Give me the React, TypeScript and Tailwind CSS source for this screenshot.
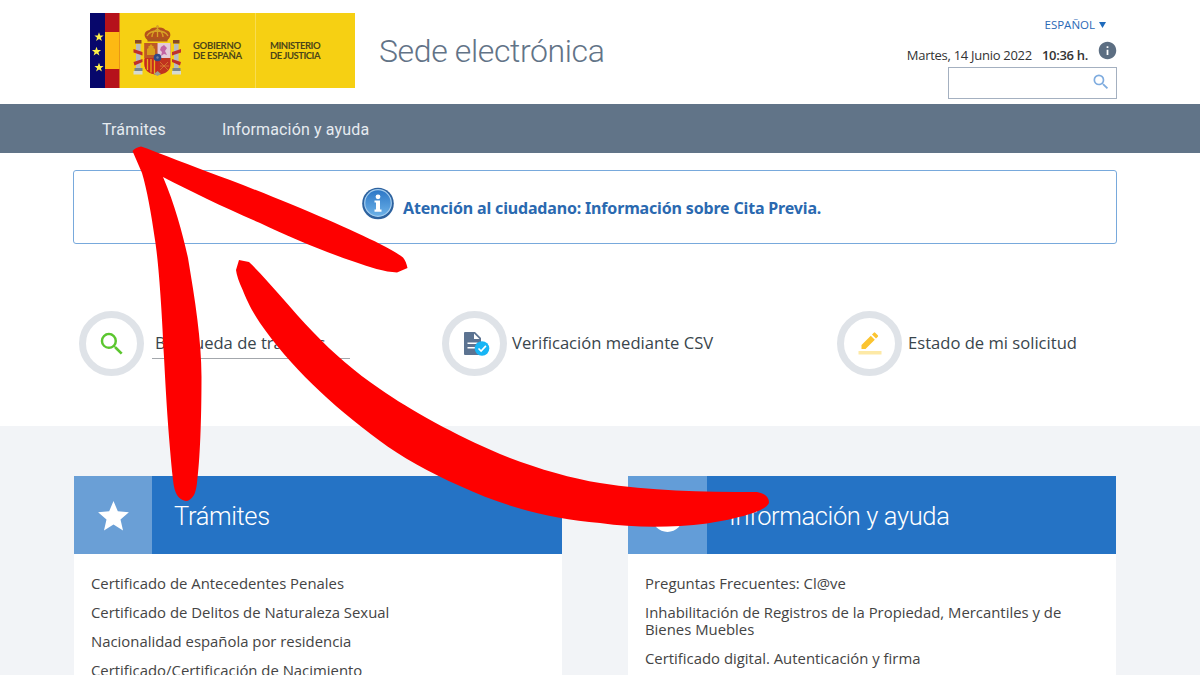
import React from "react";
import { MdSearch, MdStar, MdInfo } from "react-icons/md";

function Star({ x, y }: { x: number; y: number }) {
  return (
    <path
      transform={`translate(${x} ${y})`}
      fill="#fdf04a"
      d="M0-4.8 1.2-1.4 4.6-1.4 1.9.7 2.9 4 0 2-2.9 4-1.9.7-4.6-1.4-1.2-1.4Z"
    />
  );
}

function Emblem() {
  return (
    <svg className="block shrink-0" width="92" height="75" viewBox="0 0 92 75">
      <rect width="15" height="75" fill="#07076b" />
      <rect x="15" width="14.500" height="75" fill="#b5121b" />
      <rect x="15" y="19" width="14.500" height="37" fill="#fdb913" />
      <Star x={9} y={24} />
      <Star x={6.5} y={38.5} />
      <Star x={9} y={54.5} />
      <g>
        <rect x="46" y="31" width="4.600" height="24" fill="#b9bcc0" />
        <rect x="84" y="31" width="4.600" height="24" fill="#b9bcc0" />
        <path d="M45 27h6.500v3.500h-6.500ZM83 27h6.500v3.500h-6.500Z" fill="#8a4a24" />
        <path d="M44.500 55h8v3h-8ZM82.500 55h8v3h-8Z" fill="#77858c" />
        <path d="M43.500 58h9v3.500h-9ZM82 58h9v3.500h-9Z" fill="#d6dad0" />
        <path d="M43.500 36l9 3v3.500l-9-3ZM91 36l-9 3v3.500l9-3ZM43.500 49l9-3v3l-8 3.500ZM91 49l-9-3v3l8 3.500Z" fill="#c0302a" />
        <path d="M57.500 27c-5-4-3-9.500 2-10 2-2.500 5-2.500 8-2.500s6 0 8 2.500c5 .5 7 6 2 10Z" fill="#b5521c" />
        <path d="M57 23c2-4 5-5 10.500-5s8.500 1 10.500 5M62 24c0-4 2-6 5.500-8 3.500 2 5.500 4 5.500 8M67.500 12v12M66 13.500h3" fill="none" stroke="#d8a325" strokeWidth="1.300" />
        <rect x="57.500" y="25.500" width="20" height="3" fill="#a8561f" />
        <path d="M54.500 30h26v21c0 7-5 10-13 11-8-1-13-4-13-11Z" fill="#c0331f" />
        <path d="M54.500 30h13v15h-13Z" fill="#bd5a26" />
        <path d="M67.500 30h13v15h-13Z" fill="#e4cbd8" />
        <path d="M71 34l3-2 3 3-2 3 2 4-3-1-3 2 1-4-2-2Z" fill="#c264a4" />
        <path d="M57 42v-6l1.500-1v-2h1l1.500-2 1.500 2h1v2l1.500 1v6Z" fill="#d9a01c" />
        <path d="M54.500 46h13v15.500c-8-1-13-3-13-10.500Z" fill="#c8291f" />
        <path d="M57.500 46v11M61 46v13.500M64.500 46v15" stroke="#e9ad1c" strokeWidth="1.300" />
        <path d="M70 49l8 8M78 49l-8 8M70 53h9" stroke="#d98233" strokeWidth=".8" />
        <circle cx="67.500" cy="44.500" r="3.800" fill="#314a86" />
        <circle cx="67.500" cy="44.500" r="1.200" fill="#71809e" />
        <path d="M64 61l3.500-3 3.500 3-3.500 2Z" fill="#9c9f91" />
      </g>
    </svg>
  );
}

function Logo() {
  return (
    <div className="flex h-[75px] w-[265px] items-start bg-[#f6d013] font-['Lato','Open_Sans',sans-serif] text-[9.5px] font-bold leading-[10px] text-[#4b4518]">
      <Emblem />
      <div className="ml-[11px] w-[62px] whitespace-nowrap pt-[28px] tracking-[-0.3px]">
        GOBIERNO
        <br />
        DE ESPAÑA
      </div>
      <div className="h-full w-[100px] whitespace-nowrap border-l border-[#f9dc50] pl-[14px] pt-[28px] tracking-[-0.48px]">
        MINISTERIO
        <br />
        DE JUSTICIA
      </div>
    </div>
  );
}

function Header() {
  return (
    <header className="flex h-[104px] bg-white pl-[90px] pr-[83px]">
      <div className="pt-[13px]">
        <Logo />
      </div>
      <h1 className="ml-[24px] whitespace-nowrap pt-[31px] font-['Roboto'] text-[32px] font-light leading-[40px] tracking-[-0.38px] text-[#627387]">
        Sede electrónica
      </h1>
      <div className="ml-auto flex flex-col items-end font-['Open_Sans'] text-[#333]">
        <div className="mr-[11px] mt-[17px] flex h-4 items-center gap-1 text-[11.5px] text-[#2a69b5]">
          <span className="whitespace-nowrap">ESPAÑOL</span>
          <svg width="7" height="6" viewBox="0 0 7 6">
            <path d="M0 0h7L3.500 6Z" fill="#1f6bbd" />
          </svg>
        </div>
        <div className="mt-[7px] flex h-[20px] whitespace-nowrap text-[13px]">
          <span className="pt-[5px] leading-[20px] tracking-[-0.28px]">Martes, 14 Junio 2022</span>
          <b className="ml-[10px] pt-[5px] font-semibold leading-[20px] tracking-[-0.3px]">10:36 h.</b>
          <MdInfo className="ml-[9px] -mr-[1px] size-[21px] text-[#5c6e82]" />
        </div>
        <div className="mt-[7px] flex h-[32px] w-[169px] items-center justify-end border border-[#a4b0c0] pr-[5px]">
          <MdSearch className="-mt-[2px] size-[20px] text-[#7facdf]" />
        </div>
      </div>
    </header>
  );
}

function InfoBadge() {
  return (
    <svg className="mr-[9px] -mt-[8px]" width="32" height="33" viewBox="0 0 32 33">
      <defs>
        <linearGradient id="badge" x1="0" y1="0" x2="0" y2="1">
          <stop offset="0" stopColor="#2b76c6" />
          <stop offset="1" stopColor="#6db2e8" />
        </linearGradient>
      </defs>
      <circle cx="16" cy="16.500" r="15.800" fill="#2d629f" />
      <circle cx="16" cy="16" r="13.300" fill="url(#badge)" stroke="#a4cdef" strokeWidth="1.200" />
      <circle cx="16" cy="9.800" r="2.400" fill="#fff" />
      <path d="M12.500 13.500h5.500v9h1.500v2.200h-7v-2.200H14v-7h-1.500Z" fill="#fff" />
    </svg>
  );
}

function Ring({ children }: { children: React.ReactNode }) {
  return (
    <div className="flex size-[65px] shrink-0 items-center justify-center rounded-full border-[7px] border-[#dfe3e8] bg-white">
      {children}
    </div>
  );
}

function Shortcuts() {
  return (
    <section className="mt-[67px] flex h-[65px] items-center whitespace-nowrap pl-[79px] font-['Open_Sans'] text-[16.6px] text-[#39454c]">
      <div className="flex w-[363px] items-center">
        <Ring>
          <MdSearch className="size-[30px] text-[#5bc62f]" />
        </Ring>
        <span className="ml-[8px] h-[30px] w-[198px] border-b border-[#a3a7ac] pl-[3px] leading-[27px]">Búsqueda de trámites</span>
      </div>
      <div className="flex w-[395px] items-center">
        <Ring>
          <svg className="ml-[3px]" width="27" height="26" viewBox="0 0 27 26">
            <path d="M2 1h10l6 6v17H2a1 1 0 0 1-1-1V2a1 1 0 0 1 1-1Z" fill="#5c7391" />
            <path d="M11 2.500V8h5.500Z" fill="#fff" />
            <path d="M4.500 12.300h10M4.500 16.800h8" stroke="#fff" strokeWidth="1.600" />
            <circle cx="19" cy="17.500" r="7.300" fill="#17b5f5" />
            <path d="m15.500 17.500 2.600 2.600 4.800-5.200" fill="none" stroke="#fff" strokeWidth="1.600" />
          </svg>
        </Ring>
        <span className="-mt-px ml-[5px]">Verificación mediante CSV</span>
      </div>
      <div className="flex items-center">
        <Ring>
          <svg className="ml-px" width="26" height="26" viewBox="0 0 26 26">
            <path d="M4.500 14 13.800 4.700l4 4L8.500 18H4.500ZM15 3.500l1.800-1.800a1 1 0 0 1 1.400 0L20.800 4.300a1 1 0 0 1 0 1.400l-1.800 1.800Z" fill="#fbc430" />
            <rect x="1.500" y="20" width="23" height="3.500" fill="#fde9a6" />
          </svg>
        </Ring>
        <span className="-mt-px ml-[6px]">Estado de mi solicitud</span>
      </div>
    </section>
  );
}

function Panel({ title, icon, items, width, iconBg }: { title: string; icon: React.ReactNode; items: string[]; width: string; iconBg: string }) {
  return (
    <div className="h-full w-[488px] bg-white">
      <div className="flex h-[78px] items-stretch bg-[#2573c5]">
        <div className={`flex shrink-0 items-center justify-center ${width} ${iconBg}`}>{icon}</div>
        <h2 className="whitespace-nowrap pl-[22px] font-['Roboto'] text-[25.5px] font-light leading-[81px] tracking-[-0.38px] text-white">{title}</h2>
      </div>
      <ul className="flex flex-col gap-[12px] pt-[21px] pl-[17px] pr-[40px] font-['Open_Sans'] text-[14.88px] leading-[17px] text-[#444]">
        {items.map((item) => (
          <li key={item}>{item}</li>
        ))}
      </ul>
    </div>
  );
}

function Arrow() {
  return (
    <svg className="pointer-events-none absolute left-0 top-0" width="1200" height="675" viewBox="0 0 1200 675" fill="#fe0000">
      <path d="M132.500 151Q135 147.500 141 146.500L147 148.500C174 159 200 169 230 180C290 203 350 229 380 244Q396 252 403 257.500Q406 261 407.500 268L397 272.500Q388 272 376.500 269C340 258 295 240 260 223C225 208 190 191 163 177C175 205 183 235 188 258C195 300 201.500 340 201.500 377C201.500 420 200 460 197 483Q196 491 194 495Q190 501 186 501Q180 500 177 495Q174 490 173 480C168 430 166 395 164 357C162 315 159 265 155 240C151 212 147 190 142 173Z" />
      <path d="M239 260L249 262C268 280 290 308 313 332C333 353 355 372 380 389C410 410 455 435 500 454C535 468 570 478 600 483C650 491 700 492 757 492Q769 494 769 503C765 512 735 519 707 523.500C670 528 635 528 600 523C550 519 505 507 460 486C430 473 400 456 380 441C330 404 290 366 260 323C250 308 246 298 242.700 290Q237 278 236 270Z" />
    </svg>
  );
}

export default function App() {
  return (
    <div className="relative h-[675px] w-[1200px] overflow-hidden bg-white">
      <Header />
      <nav className="flex h-[49px] bg-[#617488] pl-[102px] font-['Roboto'] text-[16px] leading-[51px] tracking-[0.15px] text-[#e6ebf0]">
        <a className="w-[120px]">Trámites</a>
        <a className="whitespace-nowrap">Información y ayuda</a>
      </nav>
      <div className="ml-[73px] mt-[17px] flex h-[74px] w-[1044px] items-center rounded-[3px] border border-[#78a9dc] pl-[288px]">
        <InfoBadge />
        <span className="whitespace-nowrap pt-[2px] font-['Noto_Sans'] text-[16px] font-bold tracking-[-0.17px] text-[#2a69b0]">
          Atención al ciudadano: Información sobre Cita Previa.
        </span>
      </div>
      <Shortcuts />
      <main className="mt-[50px] flex h-[249px] items-start gap-[66px] bg-[#f2f4f7] pl-[74px] pt-[50px]">
        <Panel
          title="Trámites"
          width="w-[78px]"
          iconBg="bg-[#6a9fd6]"
          icon={<MdStar className="mt-[3px] size-[37px] text-white" />}
          items={[
            "Certificado de Antecedentes Penales",
            "Certificado de Delitos de Naturaleza Sexual",
            "Nacionalidad española por residencia",
            "Certificado/Certificación de Nacimiento",
          ]}
        />
        <Panel
          title="Información y ayuda"
          width="w-[79px]"
          iconBg="bg-[#639dd8]"
          icon={<MdInfo className="mt-[2px] size-[37px] text-white" />}
          items={[
            "Preguntas Frecuentes: Cl@ve",
            "Inhabilitación de Registros de la Propiedad, Mercantiles y de Bienes Muebles",
            "Certificado digital. Autenticación y firma",
          ]}
        />
      </main>
      <Arrow />
    </div>
  );
}
